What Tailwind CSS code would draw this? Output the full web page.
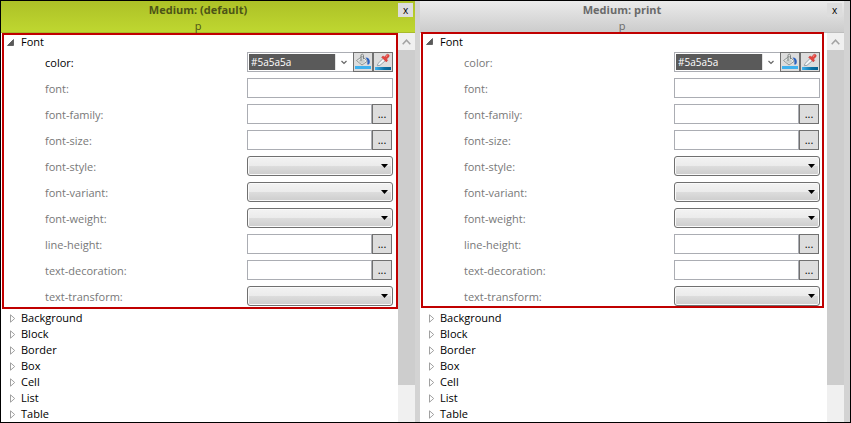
<!DOCTYPE html>
<html lang="en">
<head>
<meta charset="utf-8">
<title>Style editor</title>
<script src="https://cdn.jsdelivr.net/npm/@tailwindcss/browser@4"></script>
</head>
<body class="bg-white">
<main id="app" class="flex h-screen overflow-hidden border border-black bg-[#d3d3d3] pr-[6px] font-['Open_Sans','Noto_Sans',sans-serif] text-[11px] leading-[16px] text-black"></main>
<script>
const paintIcon = `<svg viewBox="0 0 18 18" class="h-[18px] w-[18px]" aria-hidden="true">
  <rect x="1" y="13" width="16" height="3" fill="#3fb1ee"/>
  <path d="M2.500 7.500 8 3.500l5.500 4.500L8 12z" fill="#f1f1ee" stroke="#858b8b" stroke-width=".9"/>
  <path d="M4 8 8 5l3.500 3L8 11z" fill="#c9cfce"/>
  <path d="M7 8V2.400C7 .8 9.500 .8 9.500 2.500V6" fill="none" stroke="#7d8280" stroke-width="1"/>
  <path d="M11.500 4.500c3 0 4.500 2 4.300 4.500-.1 1.800-1 2.700-2 2.700-.9-.4-.3-1.700-.3-3 0-1.500-.9-3-2-4.200z" fill="#2b62c0"/>
</svg>`;
const pickIcon = `<svg viewBox="0 0 18 18" class="h-[18px] w-[18px]" aria-hidden="true">
  <defs><linearGradient id="bar"><stop offset="0" stop-color="#3fb1ee"/><stop offset=".6" stop-color="#0a6fa3"/><stop offset="1" stop-color="#07608f"/></linearGradient></defs>
  <rect x="1" y="14" width="16" height="3" fill="url(#bar)"/>
  <path d="M3.300 12.700 4 10.500 9.300 5.300l2.200 2.200L6 12.300z" fill="#f4f8fa" stroke="#8e9ba3" stroke-width=".9"/>
  <path d="M7.600 4.200 9 3l1.700 1 2-2.500c1.300-1 3.300.7 2.300 2.200l-2.300 2.200.9 1.700-1.300 1.300z" fill="#e2453f" stroke="#c43a38" stroke-width=".5"/>
  <path d="m12 3.600 1.500-1.400" stroke="#ff9f97" stroke-width="1"/>
</svg>`;
const openTri = `<svg viewBox="0 0 7 7" class="h-[7px] w-[7px]" aria-hidden="true"><path d="M6.500.5v6H.5z" fill="#595959" stroke="#333" stroke-width=".6"/></svg>`;
const closedTri = `<svg viewBox="0 0 6 9" class="h-[9px] w-[6px]" aria-hidden="true"><path d="M.5.8v7.400L4.700 4.500z" fill="#fff" stroke="#969696" stroke-width=".9"/></svg>`;

const square = 'flex h-[20px] w-[20px] shrink-0 items-center justify-center border border-[#707070] bg-[#dddddd]';
const box = 'h-[20px] min-w-0 flex-1 border border-[#abadb3] bg-white px-1';

const controls = {
  color: id => `<div class="flex h-[20px] w-[106px] border border-r-0 border-[#abadb3] bg-white p-px">
      <input id="${id}" value="#5a5a5a" class="h-[16px] w-[86px] bg-[#5a5a5a] px-[2px] text-[10px] leading-[16px] font-medium text-white">
      <button aria-label="Show colours" class="flex flex-1 items-center justify-center border-l border-[#e3e3e3]"><svg viewBox="0 0 6 5" class="h-[5px] w-[6px]" aria-hidden="true"><path d="M.5 1 3 3.500 5.500 1" fill="none" stroke="#666" stroke-width="1.200"/></svg></button>
    </div>
    <button aria-label="Fill colour" class="${square}">${paintIcon}</button>
    <button aria-label="Pick colour" class="${square}">${pickIcon}</button>`,
  text: id => `<input id="${id}" class="${box}">`,
  more: id => `<input id="${id}" class="${box}"><button aria-label="Edit value" class="${square} mr-px">...</button>`,
  list: id => `<div class="relative flex-1">
      <select id="${id}" class="block h-[20px] w-full appearance-none rounded-[3px] border border-[#707070] bg-[linear-gradient(to_bottom,#f3f3f3_0%,#ebebeb_50%,#dddddd_50%,#cdcdcd_100%)] px-2 shadow-[inset_0_0_0_1px_#fafafa]"><option></option></select>
      <svg viewBox="0 0 7 4" class="pointer-events-none absolute top-[8px] right-[5px] h-[4px] w-[7px]" aria-hidden="true"><path d="M0 0h7L3.500 4z" fill="#000"/></svg>
    </div>`
};

const properties = [
  ['color', 'color'], ['font', 'text'], ['font-family', 'more'], ['font-size', 'more'], ['font-style', 'list'],
  ['font-variant', 'list'], ['font-weight', 'list'], ['line-height', 'more'], ['text-decoration', 'more'], ['text-transform', 'list']
];
const groups = ['Background', 'Block', 'Border', 'Box', 'Cell', 'List', 'Table'];

const panels = [
  { key: 'default', title: 'Medium: (default)',
    head: 'border-[#a9bb2a] bg-linear-to-b from-[#adc127] to-[#bfd730] text-[#4c5416]',
    close: 'bg-[#dddddd]', first: 'text-black',
    frame: 'ml-px pb-px', fontRow: 'h-[14px]', form: 'pr-[3px]', groups: 'pt-px pl-[9px]', bar: '' },
  { key: 'print', title: 'Medium: print',
    head: 'border-[#bdbdbd] bg-linear-to-b from-[#ebebeb] to-[#cccccc] text-[#6a6a6a]',
    close: 'bg-[#dddddd]', first: 'text-[#787878]',
    frame: '-mt-px ml-px', fontRow: 'h-[15px]', form: 'pr-[2px]', groups: 'pt-[2px] pl-[9px]', bar: 'ml-[3px]' }
];

const panel = p => `<section class="flex min-w-0 flex-col ${p.key === 'default' ? 'flex-[414]' : 'flex-[424]'}">
  <header class="flex h-[32px] shrink-0 gap-[3px] border-b pr-[2px] ${p.head}">
    <div class="flex-1 text-center">
      <h2 class="pt-px font-bold">${p.title}</h2>
      <p>p</p>
    </div>
    <button aria-label="Close" class="mt-[2px] flex h-[14px] w-[15px] items-center justify-center text-[10px] leading-[12px] text-black ${p.close}">x</button>
  </header>
  <div class="flex min-h-0 flex-1 bg-white">
    <div class="min-w-0 flex-1">
      <div class="border-2 border-[#c00000] ${p.frame}">
        <button aria-expanded="true" class="flex items-center gap-[7px] pl-[3px] ${p.fontRow}">${openTri}<span>Font</span></button>
        <div class="flex flex-col gap-[6px] pt-[3px] pl-[41px] ${p.form}">
          ${properties.map(([name, kind], i) => `<div class="flex items-center">
            <label for="${p.key}-${name}" class="flex-1 pt-[2px] ${i ? 'text-[#787878]' : p.first}">${name}:</label>
            <div class="flex w-[146px]">${controls[kind](p.key + '-' + name)}</div>
          </div>`).join('')}
        </div>
      </div>
      <ul class="${p.groups}">
        ${groups.map(g => `<li><button aria-expanded="false" class="flex h-[16px] items-center gap-[5px]">${closedTri}<span>${g}</span></button></li>`).join('')}
      </ul>
    </div>
    <div class="flex w-[17px] shrink-0 flex-col bg-[#f0f0f0] ${p.bar}">
      <button aria-label="Scroll up" class="flex h-[17px] items-center justify-center"><svg viewBox="0 0 9 6" class="h-[6px] w-[9px]" aria-hidden="true"><path d="M.7 5.300 4.500 1.200l3.800 4.100" fill="none" stroke="#a3a3a3" stroke-width="1.500"/></svg></button>
      <div class="flex-1"><div class="h-[90%] bg-[#cdcdcd]"></div></div>
    </div>
  </div>
</section>`;

document.getElementById('app').innerHTML = panels.map(panel).join('<div class="w-[5px] shrink-0"></div>');
</script>
</body>
</html>
